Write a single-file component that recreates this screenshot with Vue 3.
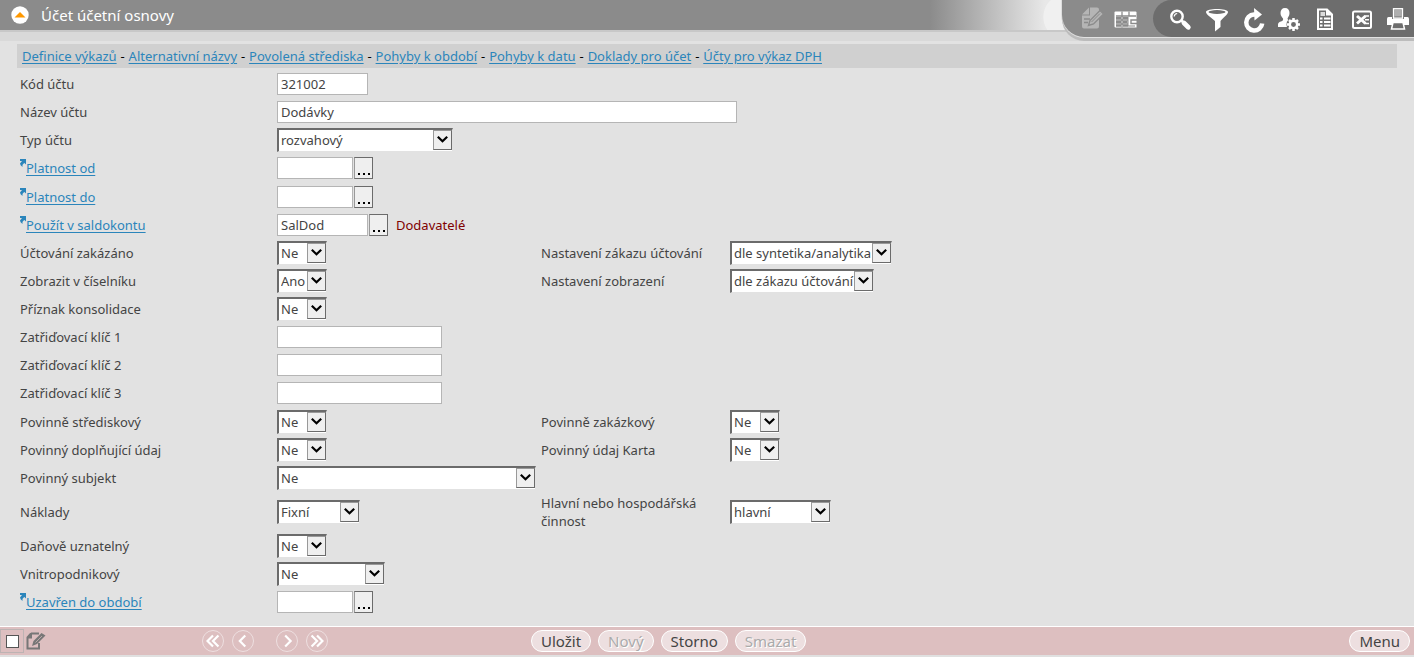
<script setup>
import { ref } from 'vue'

const links = [
  'Definice výkazů',
  'Alternativní názvy',
  'Povolená střediska',
  'Pohyby k období',
  'Pohyby k datu',
  'Doklady pro účet',
  'Účty pro výkaz DPH'
]

const yesNo = ['Ne', 'Ano']

const rows = ref([
  [{ id: 'kod', label: 'Kód účtu', type: 'text', size: 'code', value: '321002' }],
  [{ id: 'nazev', label: 'Název účtu', type: 'text', size: 'name', value: 'Dodávky' }],
  [{ id: 'typ', label: 'Typ účtu', type: 'select', size: 'type', value: 'rozvahový', options: ['rozvahový', 'výsledkový'] }],
  [{ id: 'od', label: 'Platnost od', type: 'lookup', size: 'date', value: '', tall: true }],
  [{ id: 'do', label: 'Platnost do', type: 'lookup', size: 'date', value: '' }],
  [{ id: 'saldo', label: 'Použít v saldokontu', type: 'lookup', size: 'code', value: 'SalDod', note: 'Dodavatelé' }],
  [
    { id: 'zakaz', label: 'Účtování zakázáno', type: 'select', size: 'flag', value: 'Ne', options: yesNo },
    { id: 'nzakaz', label: 'Nastavení zákazu účtování', type: 'select', size: 'rule', value: 'dle syntetika/analytika', options: ['dle syntetika/analytika'] }
  ],
  [
    { id: 'zobraz', label: 'Zobrazit v číselníku', type: 'select', size: 'flag', value: 'Ano', options: yesNo },
    { id: 'nzobraz', label: 'Nastavení zobrazení', type: 'select', size: 'view', value: 'dle zákazu účtování', options: ['dle zákazu účtování'] }
  ],
  [{ id: 'konsol', label: 'Příznak konsolidace', type: 'select', size: 'flag', value: 'Ne', options: yesNo }],
  [{ id: 'klic1', label: 'Zatřiďovací klíč 1', type: 'text', size: 'key', value: '' }],
  [{ id: 'klic2', label: 'Zatřiďovací klíč 2', type: 'text', size: 'key', value: '' }],
  [{ id: 'klic3', label: 'Zatřiďovací klíč 3', type: 'text', size: 'key', value: '', tall: true }],
  [
    { id: 'stred', label: 'Povinně střediskový', type: 'select', size: 'flag', value: 'Ne', options: yesNo },
    { id: 'zakazk', label: 'Povinně zakázkový', type: 'select', size: 'flag', value: 'Ne', options: yesNo }
  ],
  [
    { id: 'dopln', label: 'Povinný doplňující údaj', type: 'select', size: 'flag', value: 'Ne', options: yesNo },
    { id: 'karta', label: 'Povinný údaj Karta', type: 'select', size: 'flag', value: 'Ne', options: yesNo }
  ],
  [{ id: 'subjekt', label: 'Povinný subjekt', type: 'select', size: 'subject', value: 'Ne', options: yesNo }],
  [
    { id: 'naklady', label: 'Náklady', type: 'select', size: 'cost', value: 'Fixní', options: ['Fixní', 'Variabilní'], double: true },
    { id: 'cinnost', label: 'Hlavní nebo hospodářská činnost', type: 'select', size: 'activity', value: 'hlavní', options: ['hlavní', 'hospodářská'] }
  ],
  [{ id: 'dan', label: 'Daňově uznatelný', type: 'select', size: 'flag', value: 'Ne', options: yesNo }],
  [{ id: 'vnitro', label: 'Vnitropodnikový', type: 'select', size: 'internal', value: 'Ne', options: yesNo }],
  [{ id: 'uzavren', label: 'Uzavřen do období', type: 'lookup', size: 'date', value: '' }]
])

const marked = ref(false)
</script>

<template>
  <div class="page">
    <header class="header">
      <div class="titlebar">
        <button class="collapse" type="button" aria-label="Sbalit">
          <svg viewBox="0 0 18 18" width="18" height="18"><circle cx="9" cy="9" r="8.7" fill="#fff" /><path d="M3.5 11.500 9 6l5.500 5.500z" fill="#ff9800" /></svg>
        </button>
        <h1>Účet účetní osnovy</h1>
      </div>
      <div class="fade"></div>
      <div class="toolbar">
        <div class="group light">
          <button type="button" disabled aria-label="Upravit">
            <svg viewBox="0 0 24 24"><path fill="#b5b5b5" d="M10 .5h7q2 0 2 2v17q0 2-2 2H4q-2 0-2-2V8.500h8z" /><path fill="#b5b5b5" d="M2 7.500 9 .5v7z" /><path d="M4 12h6M4 15.500h4" stroke="#8b8b8b" stroke-width="1.600" /><path d="m8.500 18.500 1.500-5L20 3.500 23.500 7l-10 10z" fill="#b5b5b5" stroke="#8b8b8b" stroke-width="1.400" /><path d="m11.500 15 8.500-8.500" stroke="#8b8b8b" stroke-width="1" /></svg>
          </button>
          <button type="button" aria-label="Tabulka">
            <svg viewBox="0 0 24 24"><path fill="#fff" d="M.5 5.500q0-1 1-1h20q1 0 1 1v15H1.500q-1 0-1-1z" /><path d="M8 4.500v16M15 4.500v5M2 9h20M2 13h12M2 17h12" stroke="#8b8b8b" stroke-width="1.300" /><path d="M2 11h5M9 11h5M2 15h5M9 15h4.500M2 18.800h5M9 18.800h5" stroke="#8b8b8b" stroke-width="2" /><path d="M24 13h-7v3.500h7" fill="none" stroke="#8b8b8b" stroke-width="1.400" /><path d="M14 10v9h7" fill="none" stroke="#8b8b8b" stroke-width="1" /></svg>
          </button>
        </div>
        <div class="group dark">
          <button type="button" aria-label="Hledat">
            <svg viewBox="0 0 24 24"><circle cx="8" cy="9.500" r="5.700" fill="none" stroke="#fff" stroke-width="2.400" /><path d="M5.200 9.500q.3-2.800 3-3" fill="none" stroke="#fff" stroke-width="1.200" /><path d="m12.500 13.500 2 2" stroke="#fff" stroke-width="2.500" /><path d="m15 16 4.300 4.200" stroke="#fff" stroke-width="4.800" stroke-linecap="round" /></svg>
          </button>
          <button type="button" aria-label="Filtr">
            <svg viewBox="0 0 24 24"><path fill="#fff" d="M1 5c0-4 22-4 22 0 0 2-3 4-7.500 9v6L10 24.500V14C4 9 1 7 1 5z" /><ellipse cx="12" cy="5" rx="8.500" ry="1.900" fill="#6d6d6d" /></svg>
          </button>
          <button type="button" aria-label="Obnovit">
            <svg viewBox="0 0 24 24"><path d="M14.500 7.500H13a8 8 0 1 0 8.200 9" fill="none" stroke="#fff" stroke-width="4.500" /><path d="m13 1 8 6.500-7.500 6z" fill="#fff" /></svg>
          </button>
          <button type="button" aria-label="Nastavení uživatele">
            <svg viewBox="0 0 24 24"><path fill="#fff" d="M8 1c3 0 4.500 2 4.500 5S11 10 10.500 11.500c0 1.500 2 2 4 3L11 20H1c0-4 0-4.500 3-5.500 1.500-.5 2.500-1.500 2-3C5 10 3.500 9 3.500 6S5 1 8 1z" /><circle cx="16.500" cy="17.500" r="7" fill="#6d6d6d" /><circle cx="16.500" cy="17.500" r="3.700" fill="none" stroke="#fff" stroke-width="2.500" /><path d="M16.500 11v2.500M16.500 21.500V24M10 17.500h2.500M20.500 17.500H23M12 13l1.700 1.700M19.300 20.300 21 22M21 13l-1.700 1.700M13.700 20.300 12 22" stroke="#fff" stroke-width="2.500" /></svg>
          </button>
          <button type="button" aria-label="Sestava">
            <svg viewBox="0 0 24 24"><path d="M5 2.500h9l5 5v14.500H5z" fill="none" stroke="#fff" stroke-width="2" /><path d="M13 2v6.500h6z" fill="#fff" /><path d="M7.500 6H12M7.500 8H12" stroke="#fff" stroke-width="1.300" /><path d="M7 11.500h2.500M11 11.500h6.500M7 15h2.500M11 15h6.500M7 18.500h2.500M11 18.500h6.500" stroke="#fff" stroke-width="1.900" /></svg>
          </button>
          <button type="button" aria-label="Export do Excelu">
            <svg viewBox="0 0 24 24"><rect x="4" y="4.500" width="18" height="16.500" rx="1.500" fill="none" stroke="#fff" stroke-width="2" /><path d="m8 9 8.500 7.500M16.500 9 8 16.500" stroke="#fff" stroke-width="3" /><path d="M15.500 9h4.500M16 12.800h4M15.500 16.500h4.500" stroke="#fff" stroke-width="1.500" /></svg>
          </button>
          <button type="button" aria-label="Tisk">
            <svg viewBox="0 0 24 24"><rect x="8.500" y="1.700" width="9" height="9.500" fill="#8f8f8f" stroke="#fff" stroke-width="1.300" /><path d="M9.500 4h7M9.500 6h7M9.500 8h7" stroke="#ddd" stroke-width=".8" /><path fill="#fff" d="M3.500 10H7v2h12v-2h3.500Q24 10 24 12v6H2v-6q0-2 1.500-2z" /><path d="M8 15.500h10l1.500 6.500h-13z" fill="#6d6d6d" stroke="#fff" stroke-width="1.500" /></svg>
          </button>
        </div>
      </div>
    </header>

    <nav class="links">
      <template v-for="(link, i) in links" :key="link">
        <span v-if="i" class="dash">-</span><a href="#">{{ link }}</a>
      </template>
    </nav>

    <form class="form" @submit.prevent>
      <div v-for="row in rows" :key="row[0].id" class="row" :class="{ tall: row[0].tall, double: row[0].double }">
        <template v-for="f in row" :key="f.id">
          <div v-if="f.type === 'lookup'" class="label linked">
            <svg class="jump" viewBox="0 0 6 8" width="6" height="8"><path d="M0 0h6v5.500L4.500 4Q2 5 2.500 8 0 6 0 4.500L2 2H0z" fill="#2b85bb" /></svg><a :id="f.id + '-label'" href="#">{{ f.label }}</a>
          </div>
          <label v-else class="label" :for="f.id">{{ f.label }}</label>

          <div class="field">
            <span v-if="f.type === 'select'" class="combo" :class="f.size">
              <select :id="f.id" v-model="f.value">
                <option v-for="o in f.options" :key="o">{{ o }}</option>
              </select>
              <span class="drop"><svg viewBox="0 0 11 7" width="11" height="7"><path d="m.8.8 4.700 4.500L10.200.8" fill="none" stroke="#000" stroke-width="2.200" /></svg></span>
            </span>
            <template v-else-if="f.type === 'lookup'">
              <input :id="f.id" v-model="f.value" type="text" :class="f.size" :aria-labelledby="f.id + '-label'">
              <button class="more" type="button" :aria-label="'Vybrat: ' + f.label"><i></i><i></i><i></i></button>
              <span v-if="f.note" class="note">{{ f.note }}</span>
            </template>
            <input v-else :id="f.id" v-model="f.value" type="text" :class="f.size">
          </div>
        </template>
      </div>
    </form>

    <footer class="footer">
      <div class="mark">
        <label class="tick"><input v-model="marked" type="checkbox" aria-label="Označit záznam"></label>
        <svg viewBox="0 0 20 18" width="20" height="18"><path d="M5 1.500h8M5 1.500 1.500 5.500V16.500H13V11M5 1v4.500H1" fill="none" stroke="#777" stroke-width="2" /><path d="m6 14 1.500-5L15.500 1 19.500 3.500 11 12z" fill="#777" /><path d="m9.500 10.500 6.500-6.500" stroke="#ccb5b5" stroke-width=".8" /></svg>
      </div>
      <div class="pager">
        <button type="button" aria-label="První"><svg viewBox="0 0 22 22"><path d="M11 5 5 11l6 6M17 5 11 11l6 6" /></svg></button>
        <button type="button" aria-label="Předchozí"><svg viewBox="0 0 22 22"><path d="M13.500 5 7.500 11l6 6" /></svg></button>
        <button class="next" type="button" aria-label="Další"><svg viewBox="0 0 22 22"><path d="m9 5 6 6-6 6" /></svg></button>
        <button type="button" aria-label="Poslední"><svg viewBox="0 0 22 22"><path d="m5 5 6 6-6 6M11 5l6 6-6 6" /></svg></button>
      </div>
      <div class="actions">
        <button class="pill" type="button">Uložit</button>
        <button class="pill" type="button" disabled>Nový</button>
        <button class="pill" type="button">Storno</button>
        <button class="pill" type="button" disabled>Smazat</button>
      </div>
      <button class="pill" type="button">Menu</button>
    </footer>
  </div>
</template>

<style>
body {
  margin: 0;
  background: #e2e2e2;
}
</style>

<style scoped>
.page {
  display: flex;
  flex-direction: column;
  min-height: 100vh;
  font-family: "Noto Sans", "Open Sans", sans-serif;
  font-size: 13px;
  line-height: 18px;
  color: #444;
}
.page *,
.page {
  box-sizing: border-box;
}
button,
input,
select {
  margin: 0;
  padding: 0;
  font: inherit;
  color: inherit;
  border-radius: 0;
}
a {
  color: #2b85bb;
  text-decoration: underline;
  text-underline-offset: 2px;
}

.header {
  display: flex;
  align-items: flex-start;
  height: 41px;
  background: #d9d9d9;
}
.titlebar {
  flex: 1;
  display: flex;
  align-items: center;
  gap: 12px;
  height: 32px;
  padding-left: 11px;
  background: #8b8b8b;
  border-bottom: 2px solid #c8c8c8;
}
.titlebar h1 {
  margin: 0;
  font-size: 15px;
  line-height: 30px;
  font-weight: 400;
  color: #fff;
}
.collapse {
  width: 18px;
  height: 18px;
  border: 0;
  background: none;
}
.collapse svg {
  display: block;
}
.fade {
  width: 172px;
  height: 32px;
  margin-right: -40px;
  background:
    radial-gradient(ellipse 20px 22px at 133px 17px, #f0f0f0 96%, transparent 100%),
    linear-gradient(90deg, transparent 133px, #d9d9d9 133px),
    linear-gradient(90deg, #8b8b8b, #e8e8e8 115px);
  border-bottom: 2px solid #c8c8c8;
}
.toolbar {
  position: relative;
  display: flex;
  height: 37px;
  background: #8b8b8b;
  border-bottom-left-radius: 22px;
  box-shadow: 0 1px 0 #e2e2e2, 0 4px 0 #bcbcbc, -1px 0 0 #ddd;
}
.group {
  display: flex;
  align-items: center;
}
.group button {
  width: 24px;
  height: 24px;
  border: 0;
  background: none;
}
.group svg {
  display: block;
  width: 24px;
  height: 24px;
  overflow: visible;
}
.light {
  gap: 10px;
  padding: 0 15px 0 18px;
}
.dark {
  gap: 12px;
  padding: 0 5px 0 16px;
  background: #6d6d6d;
  border-radius: 22px 0 0 22px;
}

.links {
  display: flex;
  align-items: center;
  height: 24px;
  margin: 3px 17px 2px;
  padding-left: 5px;
  background: #d0d0d0;
}
.dash {
  width: 12px;
  text-align: center;
  color: #000;
}

.form {
  padding: 0 20px;
}
.row {
  display: grid;
  grid-template-columns: 257px 264px 189px 1fr;
  align-items: center;
  height: 28px;
}
.row.tall {
  height: 29px;
  padding-bottom: 1px;
}
.row.double {
  height: 40px;
}
.label {
  max-width: 170px;
}
.linked {
  display: flex;
  align-items: flex-start;
}
.jump {
  flex: none;
}
.field {
  display: flex;
  align-items: center;
  white-space: nowrap;
}
input[type="text"] {
  flex: none;
  height: 22px;
  padding: 0 3px;
  border: 1px solid #b5b5b5;
  background: #fff;
}
.combo {
  position: relative;
  display: flex;
  height: 24px;
}
.combo select {
  width: 100%;
  padding: 0 0 2px 2px;
  appearance: none;
  background: #fff;
  border: solid;
  border-width: 2px 1px 1px 2px;
  border-color: #6b6b6b #e2e2e2 #e2e2e2 #6b6b6b;
}
.drop {
  position: absolute;
  top: 2px;
  right: 1px;
  display: flex;
  align-items: center;
  justify-content: center;
  width: 19px;
  height: 20px;
  padding-bottom: 2px;
  background: #efefef;
  border: 1px solid #6b6b6b;
  border-color: #999 #6b6b6b #6b6b6b #999;
  pointer-events: none;
}
.code { width: 91px; }
.name { width: 460px; }
.type { width: 176px; }
.date { width: 76px; }
.flag { width: 50px; }
.rule { width: 162px; }
.view { width: 144px; }
.key { width: 165px; }
.subject { width: 259px; }
.cost { width: 83px; }
.activity { width: 101px; }
.internal { width: 108px; }
.more {
  display: flex;
  align-items: flex-end;
  justify-content: center;
  gap: 3px;
  width: 19px;
  height: 22px;
  margin-left: 1px;
  padding-bottom: 3px;
  background: #efefef;
  border: 1px solid #6b6b6b;
  border-left-color: #999;
}
.more i {
  width: 2px;
  height: 2px;
  background: #000;
}
.note {
  margin-left: 8px;
  color: #800000;
}

.footer {
  display: grid;
  grid-template-columns: 202px 329px 1fr auto;
  align-items: center;
  height: 31px;
  margin-top: auto;
  padding-right: 4px;
  background: #ddbfc0;
  border-top: 1px solid #fff;
  border-bottom: 2px solid #e0e0e0;
  font-size: 15px;
}
.mark {
  display: flex;
  align-items: center;
  gap: 2px;
}
.tick {
  display: flex;
  align-items: center;
  justify-content: center;
  width: 24px;
  height: 24px;
  border: 1px solid #bdb3b3;
}
.tick input {
  width: 13px;
  height: 13px;
  appearance: none;
  background: #fff;
  border: 1px solid #555;
}
.tick input:checked {
  box-shadow: inset 0 0 0 2px #fff;
  background: #555;
}
.pager {
  display: flex;
  gap: 8px;
}
.pager button {
  width: 22px;
  height: 22px;
  border: 1px solid #eedfe0;
  border-radius: 11px;
  background: none;
}
.pager .next {
  margin-left: 14px;
}
.pager svg {
  display: block;
  width: 20px;
  height: 20px;
  fill: none;
  stroke: #fff;
  stroke-width: 2.4;
}
.actions {
  display: flex;
  gap: 7px;
}
.pill {
  height: 22px;
  padding: 0 9px;
  line-height: 20px;
  color: #444;
  background: #eddfe0;
  border: 1px solid #fff;
  border-radius: 11px;
}
.pill:disabled {
  color: #aaa;
  text-shadow: 1px 1px 0 #fff;
}
</style>
